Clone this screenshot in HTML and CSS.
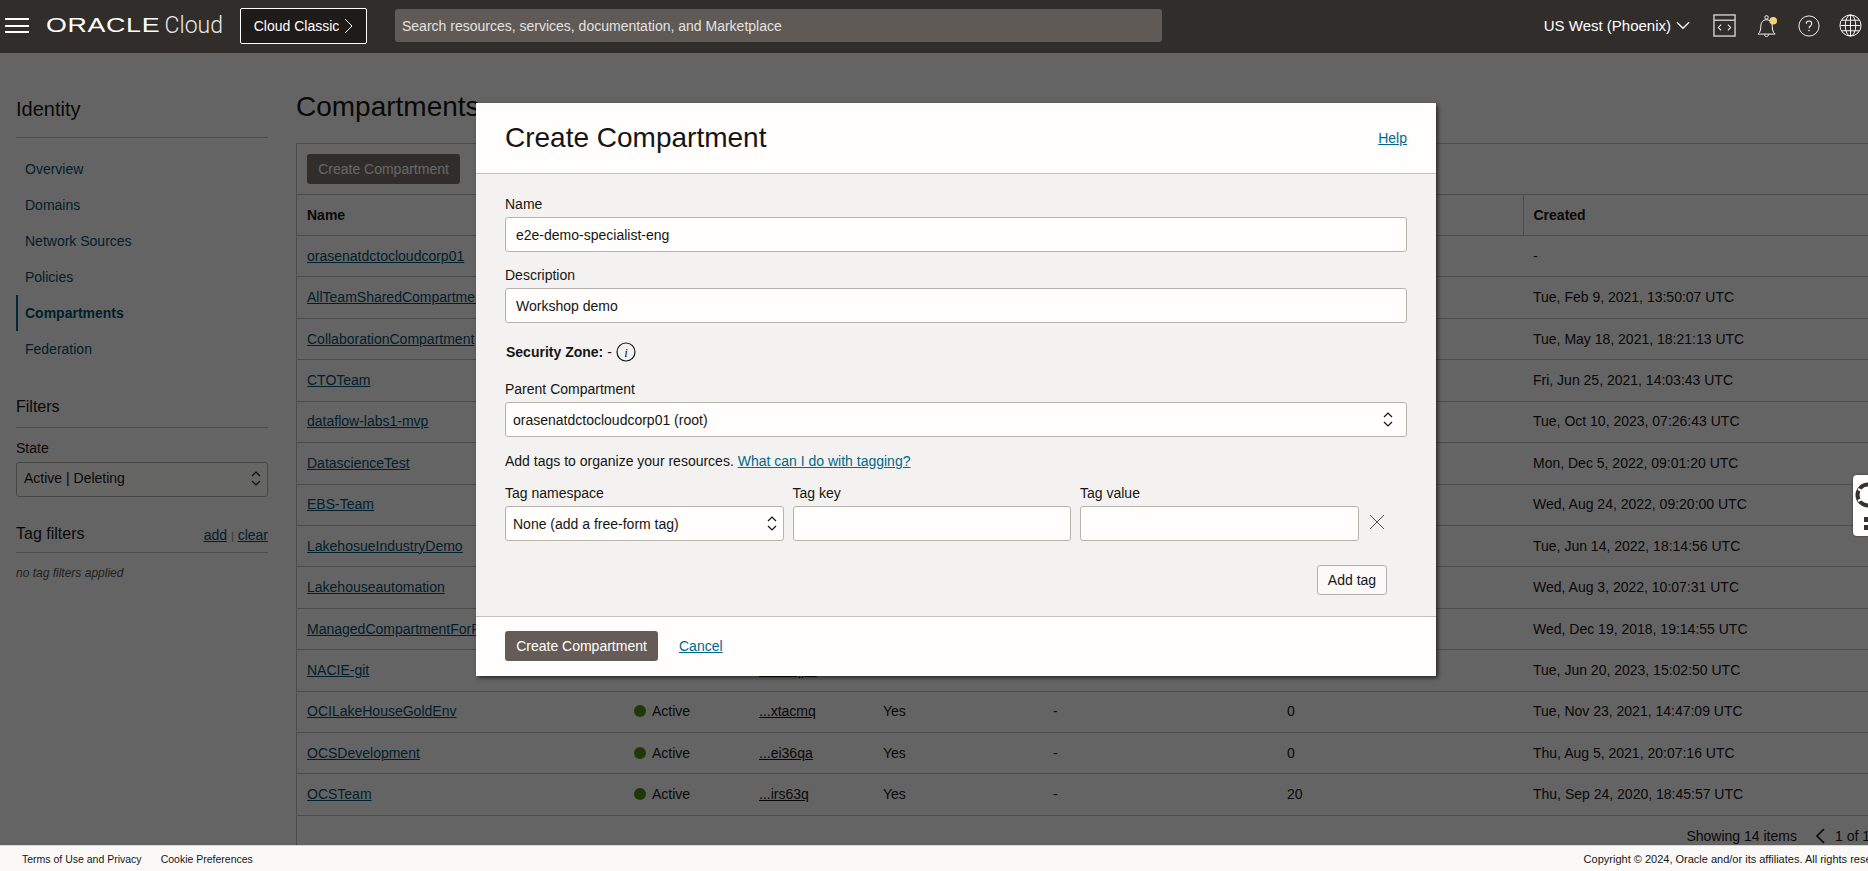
FILE: index.html
```html
<!DOCTYPE html>
<html lang="en">
<head>
    <meta charset="UTF-8">
    <title>Compartments | Oracle Cloud</title>
    <link rel="stylesheet" href="styles.css">
</head>
<body>

    <header class="topbar">
        <button class="hamburger" aria-label="Menu"><span></span><span></span><span></span></button>
        <a class="logo" href="#"><span class="logo-oracle">ORACLE</span><span class="logo-cloud">Cloud</span></a>
        <a class="classic-btn" href="#">Cloud Classic
            <svg width="9" height="16" viewBox="0 0 9 16"><path d="M1 1l7 7-7 7" fill="none" stroke="#fff" stroke-width="1"/></svg>
        </a>
        <input class="search" type="text" placeholder="Search resources, services, documentation, and Marketplace">
        <a class="region" href="#">US West (Phoenix)
            <svg width="14" height="9" viewBox="0 0 15 9"><path d="M1 1l6.5 6.5L14 1" fill="none" stroke="#fff" stroke-width="1.3"/></svg>
        </a>
        <svg class="top-icon code-icon" width="23" height="23" viewBox="0 0 24 24">
            <rect x="1" y="1" width="22" height="22" fill="none" stroke="#ccc" stroke-width="1.5"/>
            <path d="M1 6.5h22" stroke="#ccc" stroke-width="1.5"/>
            <path d="M8.5 11l-3 3 3 3M15.5 11l3 3-3 3" fill="none" stroke="#eee" stroke-width="1.1"/>
        </svg>
        <svg class="top-icon bell-icon" width="21" height="23" viewBox="0 0 22 24">
            <path d="M1 21c2-2 3-4 3-8 0-4 2-7 6-7s6 3 6 7c0 4 1 6 3 8z" fill="none" stroke="#fff" stroke-width="1"/>
            <circle cx="10" cy="3.5" r="1.8" fill="none" stroke="#fff"/>
            <path d="M8 21.5c0 3 4 3 4 0" fill="none" stroke="#fff"/>
            <circle cx="17" cy="7" r="4" fill="#f5cf7e"/>
        </svg>
        <svg class="top-icon help-icon" width="22" height="22" viewBox="0 0 24 24">
            <circle cx="12" cy="12" r="11" fill="none" stroke="#fff" stroke-width="1"/>
            <path d="M9 9.5c0-4 6-4 6 0 0 2.5-3 2.5-3 5" fill="none" stroke="#fff" stroke-width="1.1"/>
            <circle cx="12" cy="17" r=".8" fill="#fff"/>
        </svg>
        <svg class="top-icon globe-icon" width="23" height="23" viewBox="0 0 24 24">
            <circle cx="12" cy="12" r="11" fill="none" stroke="#fff" stroke-width="1"/>
            <ellipse cx="12" cy="12" rx="5.5" ry="11" fill="none" stroke="#fff" stroke-width="1"/>
            <path d="M12 1v22M1.5 12h21M3 6.5h18M3 17.5h18" stroke="#fff" stroke-width="1"/>
        </svg>
    </header>

    <div class="page">
        <aside class="sidebar">
            <h2 class="side-title">Identity</h2>
            <ul class="side-nav">
                <li><a href="#">Overview</a></li>
                <li><a href="#">Domains</a></li>
                <li><a href="#">Network Sources</a></li>
                <li><a href="#">Policies</a></li>
                <li class="active"><a href="#">Compartments</a></li>
                <li><a href="#">Federation</a></li>
            </ul>
            <h3 class="filter-title">Filters</h3>
            <label class="field-label">State</label>
            <div class="select-wrap">
                <select class="field"><option>Active | Deleting</option></select>
                <svg class="updown" width="10" height="15" viewBox="0 0 10 15"><path d="M1 5l4-4 4 4M1 10l4 4 4-4" fill="none" stroke="#161513" stroke-width="1.2"/></svg>
            </div>
            <div class="tag-head">
                <h3>Tag filters</h3>
                <span class="tag-links"><a href="#">add</a> <i>|</i> <a href="#">clear</a></span>
            </div>
            <p class="no-tags">no tag filters applied</p>
        </aside>

        <main class="content">
            <h1>Compartments</h1>
            <section class="panel">
                <div class="toolbar"><button class="btn-primary">Create Compartment</button></div>
                <table class="grid">
                    <colgroup>
                        <col class="c-name"><col class="c-status"><col class="c-ocid"><col class="c-auth"><col class="c-zone"><col class="c-sub"><col>
                    </colgroup>
                    <thead>
                        <tr><th>Name</th><th>Status</th><th>OCID</th><th>Authorized</th><th>Security Zone</th><th>Subcompartments</th><th class="created">Created</th></tr>
                    </thead>
                    <tbody>
                        <tr><td><a href="#">orasenatdctocloudcorp01</a></td><td><span class="dot"></span>Active</td><td><a class="ocid" href="#">...cq6rda</a></td><td>Yes</td><td>-</td><td>14</td><td>-</td></tr>
                        <tr><td><a href="#">AllTeamSharedCompartment</a></td><td><span class="dot"></span>Active</td><td><a class="ocid" href="#">...p2kw7a</a></td><td>Yes</td><td>-</td><td>0</td><td>Tue, Feb 9, 2021, 13:50:07 UTC</td></tr>
                        <tr><td><a href="#">CollaborationCompartment</a></td><td><span class="dot"></span>Active</td><td><a class="ocid" href="#">...t8gh3a</a></td><td>Yes</td><td>-</td><td>0</td><td>Tue, May 18, 2021, 18:21:13 UTC</td></tr>
                        <tr><td><a href="#">CTOTeam</a></td><td><span class="dot"></span>Active</td><td><a class="ocid" href="#">...k4nb9q</a></td><td>Yes</td><td>-</td><td>0</td><td>Fri, Jun 25, 2021, 14:03:43 UTC</td></tr>
                        <tr><td><a href="#">dataflow-labs1-mvp</a></td><td><span class="dot"></span>Active</td><td><a class="ocid" href="#">...z7ysla</a></td><td>Yes</td><td>-</td><td>0</td><td>Tue, Oct 10, 2023, 07:26:43 UTC</td></tr>
                        <tr><td><a href="#">DatascienceTest</a></td><td><span class="dot"></span>Active</td><td><a class="ocid" href="#">...u5vd2a</a></td><td>Yes</td><td>-</td><td>0</td><td>Mon, Dec 5, 2022, 09:01:20 UTC</td></tr>
                        <tr><td><a href="#">EBS-Team</a></td><td><span class="dot"></span>Active</td><td><a class="ocid" href="#">...w9rc1q</a></td><td>Yes</td><td>-</td><td>0</td><td>Wed, Aug 24, 2022, 09:20:00 UTC</td></tr>
                        <tr><td><a href="#">LakehosueIndustryDemo</a></td><td><span class="dot"></span>Active</td><td><a class="ocid" href="#">...b3mf6a</a></td><td>Yes</td><td>-</td><td>0</td><td>Tue, Jun 14, 2022, 18:14:56 UTC</td></tr>
                        <tr><td><a href="#">Lakehouseautomation</a></td><td><span class="dot"></span>Active</td><td><a class="ocid" href="#">...h6jx4a</a></td><td>Yes</td><td>-</td><td>0</td><td>Wed, Aug 3, 2022, 10:07:31 UTC</td></tr>
                        <tr><td><a href="#">ManagedCompartmentForPaaS</a></td><td><span class="dot"></span>Active</td><td><a class="ocid" href="#">...e2qo8q</a></td><td>Yes</td><td>-</td><td>0</td><td>Wed, Dec 19, 2018, 19:14:55 UTC</td></tr>
                        <tr><td><a href="#">NACIE-git</a></td><td><span class="dot"></span>Active</td><td><a class="ocid" href="#">...vn5qpa</a></td><td>Yes</td><td>-</td><td>0</td><td>Tue, Jun 20, 2023, 15:02:50 UTC</td></tr>
                        <tr><td><a href="#">OCILakeHouseGoldEnv</a></td><td><span class="dot"></span>Active</td><td><a class="ocid" href="#">...xtacmq</a></td><td>Yes</td><td>-</td><td>0</td><td>Tue, Nov 23, 2021, 14:47:09 UTC</td></tr>
                        <tr><td><a href="#">OCSDevelopment</a></td><td><span class="dot"></span>Active</td><td><a class="ocid" href="#">...ei36qa</a></td><td>Yes</td><td>-</td><td>0</td><td>Thu, Aug 5, 2021, 20:07:16 UTC</td></tr>
                        <tr><td><a href="#">OCSTeam</a></td><td><span class="dot"></span>Active</td><td><a class="ocid" href="#">...irs63q</a></td><td>Yes</td><td>-</td><td>20</td><td>Thu, Sep 24, 2020, 18:45:57 UTC</td></tr>
                    </tbody>
                </table>
                <div class="pager">
                    <span>Showing 14 items</span>
                    <svg width="10" height="16" viewBox="0 0 10 16"><path d="M9 1L2 8l7 7" fill="none" stroke="#161513" stroke-width="1.6"/></svg>
                    <span>1 of 1</span>
                    <svg width="10" height="16" viewBox="0 0 10 16"><path d="M1 1l7 7-7 7" fill="none" stroke="#161513" stroke-width="1.6"/></svg>
                </div>
            </section>
        </main>

        <div class="overlay">
            <div class="modal">
                <div class="modal-head">
                    <h2>Create Compartment</h2>
                    <a href="#">Help</a>
                </div>
                <form class="modal-body">
                    <label class="field-label">Name</label>
                    <input class="field" type="text" value="e2e-demo-specialist-eng">
                    <label class="field-label">Description</label>
                    <input class="field" type="text" value="Workshop demo">
                    <div class="zone-row">
                        <strong>Security Zone:</strong> -
                        <svg width="20" height="20" viewBox="0 0 20 20">
                            <circle cx="10" cy="10" r="9" fill="none" stroke="#161513" stroke-width="1.2"/>
                            <text class="info-i" x="10" y="14.5" text-anchor="middle">i</text>
                        </svg>
                    </div>
                    <label class="field-label">Parent Compartment</label>
                    <div class="select-wrap">
                        <select class="field"><option>orasenatdctocloudcorp01 (root)</option></select>
                        <svg class="updown" width="10" height="15" viewBox="0 0 10 15"><path d="M1 5l4-4 4 4M1 10l4 4 4-4" fill="none" stroke="#161513" stroke-width="1.2"/></svg>
                    </div>
                    <p class="tag-help">Add tags to organize your resources. <a href="#">What can I do with tagging?</a></p>
                    <div class="tag-grid">
                        <label class="field-label">Tag namespace</label>
                        <label class="field-label">Tag key</label>
                        <label class="field-label">Tag value</label>
                        <span></span>
                        <div class="select-wrap">
                            <select class="field"><option>None (add a free-form tag)</option></select>
                            <svg class="updown" width="10" height="15" viewBox="0 0 10 15"><path d="M1 5l4-4 4 4M1 10l4 4 4-4" fill="none" stroke="#161513" stroke-width="1.2"/></svg>
                        </div>
                        <input class="field" type="text">
                        <input class="field" type="text">
                        <svg class="remove-tag" width="14" height="14" viewBox="0 0 14 14"><path d="M0 0l14 14M14 0L0 14" stroke="#55514e" stroke-width="1"/></svg>
                    </div>
                    <div class="add-row"><button type="button" class="btn-plain">Add tag</button></div>
                </form>
                <div class="modal-foot">
                    <button class="btn-create">Create Compartment</button>
                    <a href="#">Cancel</a>
                </div>
            </div>
            <div class="side-widget">
                <svg width="15" height="61" viewBox="0 0 15 61">
                    <circle cx="15" cy="20" r="10.5" fill="none" stroke="#333" stroke-width="4"/>
                    <path d="M5 14l6 3M5 26l6-3" stroke="#fff" stroke-width="2"/>
                    <path d="M11 42h4v5h-4zM11 50h4v5h-4z" fill="#333"/>
                </svg>
            </div>
        </div>
    </div>

    <footer class="footer">
        <div class="footer-links"><a href="#">Terms of Use and Privacy</a><a href="#">Cookie Preferences</a></div>
        <span>Copyright &copy; 2024, Oracle and/or its affiliates. All rights reserved.</span>
    </footer>

</body>
</html>
```

FILE: styles.css
```css
/* Basic Reset */
* {
    margin: 0;
    padding: 0;
    box-sizing: border-box;
}

html, body {
    height: 100%;
    overflow: hidden;
}

body {
    font-family: "Liberation Sans", Arial, sans-serif;
    font-size: 14px;
    color: #161513;
    background-color: #fcfbfa;
    display: flex;
    flex-direction: column;
}

a {
    color: #00688c;
}

.sidebar a, .grid a {
    color: #00506e;
}

/* Top bar */
.topbar {
    height: 53px;
    flex: none;
    background-color: #312d2a;
    color: white;
    display: flex;
    align-items: center;
    padding: 0 0 2px 5px;
}

.hamburger {
    width: 24px;
    height: 15px;
    background: none;
    border: none;
    display: flex;
    flex-direction: column;
    justify-content: space-between;
}

.hamburger span {
    display: block;
    height: 2px;
    background-color: white;
}

.logo {
    margin-left: 17px;
    width: 177px;
    display: flex;
    align-items: center;
    color: white;
    text-decoration: none;
}

.logo-oracle {
    display: inline-block;
    width: 122px;
    font-size: 20px;
    letter-spacing: 0.5px;
    transform: scaleX(1.34);
    transform-origin: left center;
}

.logo-cloud {
    font-family: Roboto, sans-serif;
    font-weight: 300;
    font-size: 23px;
    color: #e8e6e4;
}

.classic-btn {
    margin-left: 17px;
    width: 127px;
    height: 36px;
    border: 1px solid white;
    border-radius: 2px;
    background-color: #1f1b18;
    color: white;
    text-decoration: none;
    display: flex;
    align-items: center;
    justify-content: center;
    gap: 5px;
}

.search {
    margin-left: 28px;
    width: 767px;
    height: 33px;
    padding: 0 7px;
    border: none;
    border-radius: 3px;
    background-color: #5f5a55;
    color: white;
    font: 14px "Liberation Sans", Arial, sans-serif;
}

.search::placeholder {
    color: #e4e2e0;
    opacity: 1;
}

.region {
    margin-left: auto;
    color: white;
    font-size: 15px;
    text-decoration: none;
    display: flex;
    align-items: center;
    gap: 5px;
}

.top-icon {
    flex: none;
}

.code-icon {
    margin-left: 23px;
    margin-bottom: 1px;
}

.bell-icon {
    margin-left: 21px;
}

.help-icon {
    margin-left: 20px;
}

.globe-icon {
    margin-left: 19px;
    margin-right: 6px;
}

/* Page under the dialog */
.page {
    flex: 1;
    position: relative;
    display: flex;
    overflow: hidden;
    padding-left: 16px;
}

.sidebar {
    width: 252px;
    flex: none;
    margin-right: 28px;
}

.side-title {
    font-size: 20px;
    font-weight: normal;
    line-height: 24px;
    margin-top: 44px;
    padding-bottom: 16px;
    border-bottom: 1px solid #bfbdbb;
}

.side-nav {
    list-style: none;
    margin-top: 13px;
}

.side-nav li {
    height: 36px;
    line-height: 36px;
    padding-left: 9px;
}

.side-nav a {
    text-decoration: none;
}

.side-nav .active {
    border-left: 2px solid #00688c;
    padding-left: 7px;
}

.side-nav .active a {
    font-weight: bold;
}

.filter-title {
    font-size: 16px;
    font-weight: normal;
    line-height: 20px;
    margin-top: 30px;
    padding-bottom: 10px;
    border-bottom: 1px solid #bfbdbb;
}

.sidebar .field-label {
    margin-top: 12px;
    margin-bottom: 6px;
}

.sidebar select.field {
    padding-bottom: 3px;
}

.sidebar .updown, .tag-grid .updown {
    right: 7px;
}

.sidebar .updown {
    top: 9px;
}

.tag-head {
    display: flex;
    justify-content: space-between;
    align-items: flex-end;
    margin-top: 27px;
    padding-bottom: 8px;
    border-bottom: 1px solid #bfbdbb;
}

.tag-head h3 {
    font-size: 16px;
    font-weight: normal;
    line-height: 20px;
}

.tag-links {
    line-height: 16px;
}

.tag-links i {
    font-style: normal;
    font-size: 11px;
    color: #8a8785;
}

.no-tags {
    margin-top: 13px;
    font-size: 12px;
    font-style: italic;
    color: #55514e;
}

/* Main content */
.content {
    width: 1640px;
    flex: none;
}

.content h1 {
    font-size: 28px;
    font-weight: normal;
    line-height: 32px;
    margin-top: 38px;
    margin-bottom: 20px;
}

.panel {
    border-top: 1px solid #bfbdbb;
    border-left: 1px solid #bfbdbb;
    height: 720px;
}

.toolbar {
    height: 50px;
    padding: 10px;
}

.btn-primary {
    width: 153px;
    height: 30px;
    border: none;
    border-radius: 3px;
    background-color: #7a706a;
    color: white;
    font: 14px "Liberation Sans", Arial, sans-serif;
}

.grid {
    width: 100%;
    table-layout: fixed;
    border-collapse: collapse;
}

.c-name { width: 327px; }
.c-status { width: 125px; }
.c-ocid { width: 124px; }
.c-auth { width: 170px; }
.c-zone { width: 234px; }
.c-sub { width: 246px; }

.grid th, .grid td {
    text-align: left;
    padding: 0 10px;
    white-space: nowrap;
    border-top: 1px solid #bfbdbb;
    border-bottom: 1px solid #bfbdbb;
}

.grid th {
    height: 41px;
}

.grid th.created {
    border-left: 1px solid #bfbdbb;
}

.grid td {
    height: 41.43px;
    padding-bottom: 1px;
}

.dot {
    display: inline-block;
    width: 12px;
    height: 12px;
    border-radius: 50%;
    background-color: #4f8c14;
    margin-right: 6px;
    vertical-align: -1px;
}

.grid a.ocid {
    color: #161513;
}

.pager {
    height: 40px;
    padding-right: 46px;
    display: flex;
    align-items: center;
    justify-content: flex-end;
    gap: 10px;
}

.pager span:first-child {
    margin-right: 8px;
}

/* Dialog */
.overlay {
    position: absolute;
    inset: 0;
    background-color: rgba(0, 0, 0, 0.6);
}

.modal {
    width: 960px;
    margin: 50px 0 0 476px;
    background-color: #fffefc;
    box-shadow: 2px 2px 4px rgba(0, 0, 0, 0.6);
}

.modal-head {
    height: 71px;
    padding: 0 29px;
    display: flex;
    align-items: center;
    justify-content: space-between;
    border-bottom: 1px solid #c4c1bc;
}

.modal-head h2 {
    font-size: 28px;
    font-weight: normal;
}

.modal-body {
    background-color: #f3f2f1;
    padding: 22px 29px 21px;
}

.field-label {
    display: block;
    line-height: 16px;
    margin-bottom: 5px;
}

.field {
    display: block;
    width: 100%;
    height: 35px;
    padding: 0 10px;
    border: 1px solid #b7b2ac;
    border-radius: 3px;
    background-color: #fffefc;
    color: #161513;
    font: 14px "Liberation Sans", Arial, sans-serif;
    appearance: none;
}

select.field {
    padding: 0 30px 0 7px;
}

.modal-body input.field {
    margin-bottom: 15px;
}

.select-wrap {
    position: relative;
}

.updown {
    position: absolute;
    right: 14px;
    top: 10px;
}

.zone-row {
    height: 20px;
    margin: 19px 0;
    display: flex;
    align-items: center;
    gap: 4px;
}

.zone-row strong {
    margin-left: 1px;
}

.info-i {
    font: italic 13px "Liberation Serif", serif;
    fill: #161513;
}

.tag-help {
    line-height: 16px;
    margin-top: 16px;
    margin-bottom: 16px;
}

.tag-grid {
    display: grid;
    grid-template-columns: repeat(3, 278.5px) 1fr;
    column-gap: 9px;
    align-items: center;
}

.modal-body .tag-grid input.field {
    margin-bottom: 0;
}

.remove-tag {
    margin-left: 2px;
    margin-top: -3px;
}

.add-row {
    margin-top: 24px;
    padding-right: 20px;
    display: flex;
    justify-content: flex-end;
}

.btn-plain {
    width: 70px;
    height: 30px;
    border: 1px solid #b7b2ac;
    border-radius: 3px;
    background-color: #fbfaf9;
    color: #161513;
    font: 14px "Liberation Sans", Arial, sans-serif;
}

.modal-foot {
    height: 60px;
    padding: 14px 29px;
    display: flex;
    align-items: flex-start;
    gap: 21px;
    border-top: 1px solid #c4c1bc;
}

.modal-foot a {
    line-height: 30px;
}

.btn-create {
    width: 153px;
    height: 30px;
    border: none;
    border-radius: 3px;
    background-color: #665c57;
    color: white;
    font: 14px "Liberation Sans", Arial, sans-serif;
}

.side-widget {
    position: absolute;
    right: 0;
    top: 422px;
    width: 15px;
    height: 61px;
    overflow: hidden;
    background-color: #fffefc;
    border-radius: 4px 0 0 4px;
    box-shadow: 0 0 2px rgba(0, 0, 0, 0.6);
}

/* Footer */
.footer {
    height: 26px;
    flex: none;
    width: 1908px;
    padding: 0 12px 0 22px;
    background-color: #fbf9f8;
    border-top: 1px solid #d8d6d4;
    display: flex;
    align-items: center;
    justify-content: space-between;
    font-size: 11px;
    white-space: nowrap;
    position: relative;
}

.footer-links {
    font-size: 10.5px;
}

.footer-links a {
    color: #161513;
    text-decoration: none;
    margin-right: 19px;
}
```
